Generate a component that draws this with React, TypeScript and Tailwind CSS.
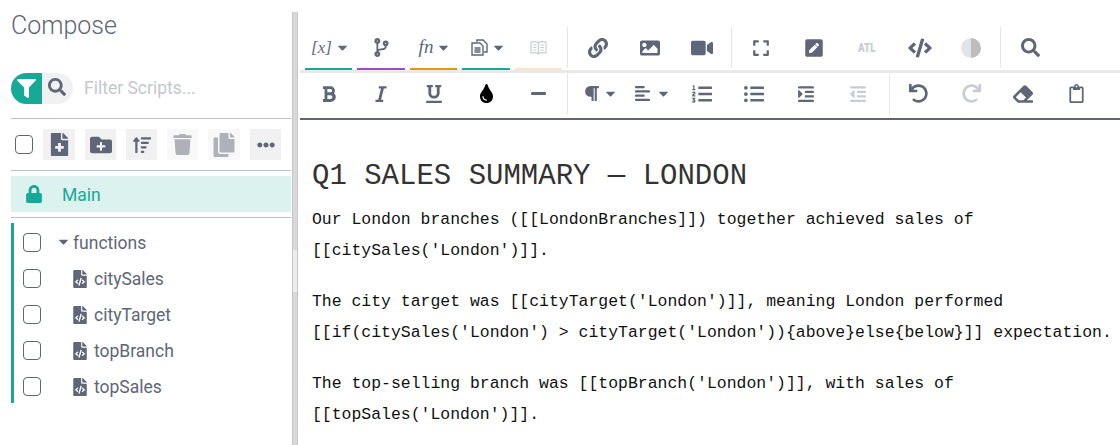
import type { ReactNode } from 'react'
import {
  FaAlignLeft, FaBold, FaCaretDown, FaCode, FaCodeBranch, FaCopy, FaEllipsisH, FaEraser, FaExpand,
  FaFileCode, FaFileMedical, FaFilter, FaFolderPlus, FaImage, FaIndent, FaItalic, FaLink, FaListOl, FaListUl, FaLock,
  FaMinus, FaOutdent, FaParagraph, FaPenSquare, FaRedo, FaRegClipboard, FaSearch,
  FaSortAmountUp, FaTint, FaTrash, FaUnderline, FaUndo, FaVideo,
} from 'react-icons/fa'

const scripts = ['citySales', 'cityTarget', 'topBranch', 'topSales']

function Check({ cls = '' }: { cls?: string }) {
  return <span className={`h-[19px] w-[18px] shrink-0 rounded-[4px] border border-[#5e6678] bg-white ${cls}`} />
}

function ActionBtn({ children, light, w = 'w-[31px]' }: { children: ReactNode; light?: boolean; w?: string }) {
  return (
    <span className={`flex h-[31px] items-center justify-center ${w} ${light ? 'bg-[#f8f8f8] text-[#aeb1b9]' : 'bg-[#f1f1f1] text-[#5e6678]'}`}>
      {children}
    </span>
  )
}

function Tool({ w, children, bar, faded }: { w: string; children: ReactNode; bar?: string; faded?: boolean }) {
  return (
    <span className={`flex h-[43px] items-center justify-center gap-[3px] border-b-2 ${w} ${bar ?? 'border-transparent'} ${faded ? 'text-[#c9ccd3]' : 'text-[#5e6678]'}`}>
      {children}
    </span>
  )
}

function Caret() {
  return <FaCaretDown size={15} />
}

function Sep({ cls }: { cls: string }) {
  return <span className={`h-[41px] w-px bg-[#e6e6e6] ${cls}`} />
}

function StackedDocs() {
  return (
    <svg className="ml-[4px]" width="17" height="17" viewBox="0 0 17 17" fill="none" stroke="currentColor" strokeWidth="1.4">
      <path d="M6 3V1h6l4 4v8h-3" />
      <path d="M1 4h8l3 3v9H1z" fill="white" />
      <path d="M3.5 9h6M3.5 11h6M3.5 13h6" />
    </svg>
  )
}

function BookOutline() {
  return (
    <svg width="17" height="16" viewBox="0 0 17 16" fill="none" stroke="currentColor" strokeWidth="1.2">
      <path d="M8.5 3C7 1.500 4 1.500 1 2v11c3-.5 6-.5 7.500 1 1.500-1.500 4.500-1.500 7.500-1V2c-3-.5-6-.5-7.500 1zM8.500 3v11" />
      <path d="M3 5h3.500M3 7.500h3.500M3 10h3.500M10.500 5H14M10.500 7.500H14M10.500 10H14" />
    </svg>
  )
}

function HalfCircle() {
  return (
    <svg width="20" height="20" viewBox="0 0 20 20">
      <path d="M10 0a10 10 0 0 0 0 20z" fill="#e0e3e7" />
      <path d="M10 0a10 10 0 0 1 0 20z" fill="#bdbdbd" />
    </svg>
  )
}

export default function App() {
  return (
    <div className="flex h-[445px] w-[1120px] overflow-hidden bg-white font-['Roboto',sans-serif]">
      <aside className="w-[292px] shrink-0 pl-[11px] pr-[1px]">
        <h1 className="mt-[9px] text-[25px] font-light leading-[34px] text-[#5e6678]">Compose</h1>
        <div className="mt-[30px] flex items-center">
          <span className="flex h-[31px] w-[31px] items-center justify-center rounded-l-full bg-[#17a998] text-white"><FaFilter size={19} /></span>
          <span className="flex h-[31px] w-[31px] items-center rounded-r-full bg-[#f1f1f1] pl-[6px] pb-[3px] text-[#5e6678]"><FaSearch size={18} /></span>
          <span className="ml-[11px] text-[17.5px] text-[#c3c7ce]">Filter Scripts...</span>
        </div>
        <div className="mt-[14px] flex items-center gap-[10px] border-y border-[#bdc1c8] py-[10px] pl-[4px]">
          <span className="flex h-[31px] w-[18px] items-center"><Check /></span>
          <ActionBtn w="w-[32px]"><FaFileMedical size={23} /></ActionBtn>
          <ActionBtn><FaFolderPlus size={22} /></ActionBtn>
          <ActionBtn><FaSortAmountUp size={18} /></ActionBtn>
          <ActionBtn light><FaTrash size={21} /></ActionBtn>
          <ActionBtn light w="w-[32px]"><FaCopy size={24} /></ActionBtn>
          <ActionBtn><FaEllipsisH size={18} /></ActionBtn>
        </div>
        <div className="mt-[5px] flex h-[36px] items-center bg-[#dcf2ef] pl-[14px] pt-[2px] text-[#17a998]">
          <FaLock size={18} className="-mt-[2px]" />
          <span className="ml-[19px] text-[17.5px]">Main</span>
        </div>
        <div className="mt-[5px] border-t border-[#bdc1c8] pt-[5px]">
          <ul className="border-l-[3px] border-[#17a998] pl-[9px] text-[17.5px] text-[#5e6678]">
            <li className="flex h-[36px] items-center pt-[5px]">
              <Check cls="-mt-[2px]" />
              <FaCaretDown size={15} className="ml-[15px] -mt-[5px]" />
              <span className="ml-[2px]">functions</span>
            </li>
            {scripts.map(s => (
              <li key={s} className="flex h-[36px] items-center pt-[5px]">
                <Check cls="-mt-[2px]" />
                <FaFileCode size={18} className="ml-[30px] -mt-[2px]" />
                <span className="ml-[5px]">{s}</span>
              </li>
            ))}
          </ul>
        </div>
      </aside>
      <div className="mr-[2px] mt-[12px] w-[6px] shrink-0 border-x border-[#c4c7cc] bg-[#d8d8d8]">
        <div className="mt-[238px] h-[42px] bg-[#ececec]" />
      </div>
      <main className="min-w-0 flex-1">
        <div className="mt-[27px] flex h-[46px] items-start border-b-[3px] border-[#e9e9e9] pl-[5px]">
          <Tool w="w-[47px] mr-[5px]" bar="border-[#17a998]"><i className="ml-[4px] font-['Liberation_Serif',serif] text-[17px] font-medium">[x]</i><Caret /></Tool>
          <Tool w="w-[48px] mr-[5px]" bar="border-[#a647c4]"><FaCodeBranch size={19} /></Tool>
          <Tool w="w-[47px] mr-[5px]" bar="border-[#e99400]"><i className="ml-[3px] font-['Liberation_Serif',serif] text-[19px] font-medium">fn</i><Caret /></Tool>
          <Tool w="w-[48px] mr-[5px]" bar="border-[#17a998]"><StackedDocs /><Caret /></Tool>
          <Tool w="w-[47px]" bar="border-[#fbe5c8]" faded><BookOutline /></Tool>
          <Sep cls="ml-[5px] mr-[4px]" />
          <Tool w="w-[52px]"><FaLink size={20} /></Tool>
          <Tool w="w-[52px]"><FaImage size={20} /></Tool>
          <Tool w="w-[52px]"><FaVideo size={22} /></Tool>
          <Sep cls="ml-[3px] mr-[3px]" />
          <Tool w="w-[52px]"><FaExpand size={18} /></Tool>
          <Tool w="w-[54px]"><FaPenSquare size={20} /></Tool>
          <Tool w="w-[52px]" faded><b className="scale-x-[0.75] text-[13px] font-black">ATL</b></Tool>
          <Tool w="w-[54px]"><FaCode size={24} /></Tool>
          <Tool w="w-[48px]"><HalfCircle /></Tool>
          <Sep cls="ml-[5px] mr-[4px]" />
          <Tool w="w-[50px]"><FaSearch size={19} /></Tool>
        </div>
        <div className="flex h-[47px] items-start border-b-2 border-[#5e6678] pl-[5px]">
          <Tool w="w-[47px] mr-[5px]"><FaBold size={18} /></Tool>
          <Tool w="w-[48px] mr-[5px]"><FaItalic size={18} /></Tool>
          <Tool w="w-[47px] mr-[5px]"><FaUnderline size={18} /></Tool>
          <Tool w="w-[48px] mr-[5px]"><span className="text-black"><FaTint size={19} /></span></Tool>
          <Tool w="w-[47px]"><FaMinus size={17} /></Tool>
          <Sep cls="ml-[5px] mr-[4px] mt-px" />
          <Tool w="w-[52px]"><FaParagraph size={17} className="ml-[4px]" /><Caret /></Tool>
          <Tool w="w-[52px]"><FaAlignLeft size={17} className="ml-[4px] mr-[2px]" /><Caret /></Tool>
          <Tool w="w-[52px]"><FaListOl size={20} /></Tool>
          <Tool w="w-[52px]"><FaListUl size={20} /></Tool>
          <Tool w="w-[52px]"><FaIndent size={18} /></Tool>
          <Tool w="w-[52px]" faded><FaOutdent size={18} /></Tool>
          <Sep cls="ml-[5px] mr-[4px] mt-px" />
          <Tool w="w-[48px]"><FaUndo size={19} /></Tool>
          <Tool w="w-[58px]" faded><FaRedo size={19} /></Tool>
          <Tool w="w-[46px]"><FaEraser size={20} /></Tool>
          <Tool w="w-[60px]"><FaRegClipboard size={19} /></Tool>
        </div>
        <article className="pl-[12px] font-['Liberation_Mono',monospace] text-[16.47px] leading-[31px] text-[#111]">
          <h2 className="mt-[35px] text-[29px] leading-[44px] text-[#333]">Q1 SALES SUMMARY — LONDON</h2>
          <p className="mt-[5px]">Our London branches ([[LondonBranches]]) together achieved sales of<br />[[citySales('London')]].</p>
          <p className="mt-[20px]">The city target was [[cityTarget('London')]], meaning London performed<br />{"[[if(citySales('London') > cityTarget('London')){above}else{below}]]"} expectation.</p>
          <p className="mt-[20px]">The top-selling branch was [[topBranch('London')]], with sales of<br />[[topSales('London')]].</p>
        </article>
      </main>
    </div>
  )
}
